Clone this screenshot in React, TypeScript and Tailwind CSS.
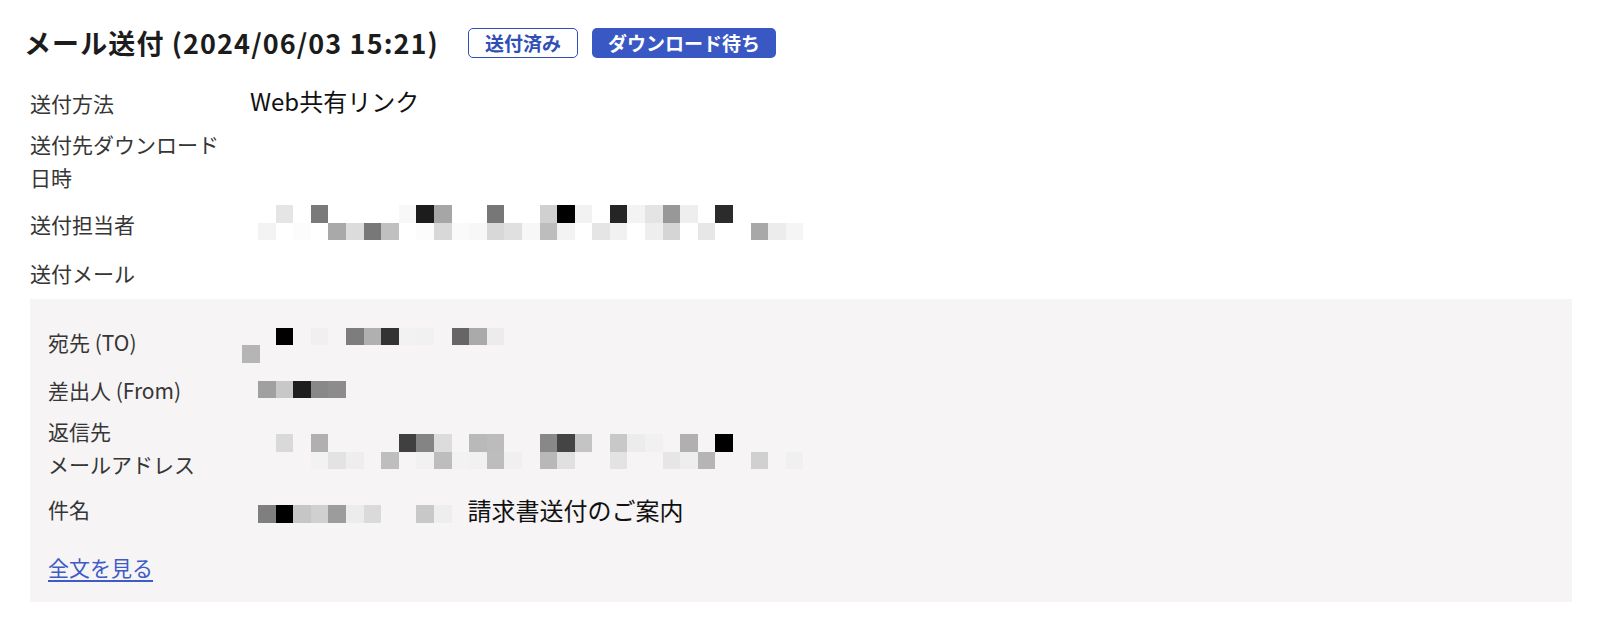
import React from 'react';

type Strip = { ml: string; cells: string[] };

const staff: Strip[] = [
  { ml: 'ml-[8px]', cells: ['', 'e5', '', '7a', '', '', '', '', 'f8', '1c', 'a6', '', '', '77', '', '', 'd0', '00', 'f2', '', '25', 'f3', 'e4', '98', 'ee', '', '2b'] },
  { ml: 'ml-[8px]', cells: ['f3', '', 'fc', '', 'a9', 'dc', '78', 'c0', '', 'fc', 'd8', 'fa', 'f7', 'd8', 'e0', 'f7', 'bd', 'f3', '', 'e5', 'f1', '', 'ee', 'd5', '', 'e7', '', '', 'a8', 'ec', 'f5'] },
];

const toAddr: Strip[] = [
  { ml: 'ml-[16px]', cells: ['', '00', '', 'f0', '', '7d', 'b0', '33', 'f2', 'f1', '', '66', 'aa', 'ec'] },
  { ml: 'ml-0', cells: ['b5'] },
];

const fromAddr: Strip[] = [{ ml: 'ml-[16px]', cells: ['a0', 'c8', '1e', '88', '8c'] }];

const replyAddr: Strip[] = [
  { ml: 'ml-[16px]', cells: ['', 'd9', '', 'b0', '', '', '', '', '40', '84', 'dc', '', 'b9', 'bc', '', '', '88', '44', 'c4', '', 'c8', 'ec', 'f1', '', 'b0', '', '00'] },
  { ml: 'ml-[16px]', cells: ['', '', '', 'f2', 'e3', 'ee', '', 'be', '', 'f1', 'bd', 'f2', 'f1', 'bd', 'f0', '', 'b8', 'e0', '', '', 'e3', '', '', 'e6', 'ee', 'b5', '', '', 'd0', '', 'f0'] },
];

const subjectCells = ['7f', '00', 'c6', 'd0', '9c', 'ec', 'da', '', '', 'c8', 'ee'];

// one grey square per entry, '' leaves the slot empty
function Cells({ cells }: { cells: string[] }) {
  return (
    <div className="flex">
      {cells.map((c, i) => (
        <span
          key={i}
          className="block h-[17.6px] w-[17.6px] shrink-0"
          style={c ? { backgroundColor: `#${c}${c}${c}` } : undefined}
        />
      ))}
    </div>
  );
}

function Mosaic({ rows }: { rows: Strip[] }) {
  return (
    <div className="flex flex-col">
      {rows.map((r, i) => (
        <div key={i} className={r.ml}>
          <Cells cells={r.cells} />
        </div>
      ))}
    </div>
  );
}

export default function App() {
  return (
    <div className="min-h-[627px] bg-white text-[#363636] font-['Noto_Sans_CJK_JP',sans-serif]">
      <header className="mt-[25px] flex h-[36px] items-center pl-[24px]">
        <h1 className="text-[27px] font-bold leading-[36px] tracking-[1.1px] text-[#1c1c1c]">メール送付 (2024/06/03 15:21)</h1>
        <span className="ml-[29px] flex h-[30px] items-center rounded-[5px] border-[1.5px] border-[#2f4fb6] bg-white px-[16px] text-[19px] font-bold text-[#2f4fb6]">
          送付済み
        </span>
        <span className="ml-[14px] flex h-[30px] items-center rounded-[5px] bg-[#3a58c3] px-[16px] text-[19px] font-bold text-white">
          ダウンロード待ち
        </span>
      </header>

      <div className="mt-[26px] px-[30px] pr-[28px] text-[21px] leading-[33px]">
        <div className="flex h-[41px] items-start">
          <div className="mr-[20px] w-[200px] shrink-0">送付方法</div>
          <div className="-mt-[4px] text-[24px] leading-[36px] text-[#111]">Web共有リンク</div>
        </div>
        <div className="flex h-[75px] items-start">
          <div className="mr-[20px] w-[200px] shrink-0">送付先ダウンロード日時</div>
          <div />
        </div>
        <div className="flex h-[54px] items-start">
          <div className="mr-[20px] mt-[5px] w-[200px] shrink-0">送付担当者</div>
          <div className="mt-[2px]">
            <Mosaic rows={staff} />
          </div>
        </div>
        <div className="flex h-[42px] items-start">
          <div className="mr-[20px] w-[200px] shrink-0">送付メール</div>
        </div>

        <section className="bg-[#f6f4f5] pb-[18px] pl-[18px] pt-[27px]">
          <div className="flex h-[48px] items-start">
            <div className="w-[194px] shrink-0">宛先 (TO)</div>
            <div className="mt-[1.5px]">
              <Mosaic rows={toAddr} />
            </div>
          </div>
          <div className="flex h-[41px] items-start">
            <div className="w-[194px] shrink-0">差出人 (From)</div>
            <div className="mt-[6.5px]">
              <Mosaic rows={fromAddr} />
            </div>
          </div>
          <div className="flex h-[78px] items-start">
            <div className="w-[194px] shrink-0">
              返信先
              <br />
              メールアドレス
            </div>
            <div className="mt-[19px]">
              <Mosaic rows={replyAddr} />
            </div>
          </div>
          <div className="flex h-[58px] items-start">
            <div className="w-[194px] shrink-0">件名</div>
            <div className="ml-[16px] mt-[12px]">
              <Cells cells={subjectCells} />
            </div>
            <div className="ml-[16px] text-[24px] leading-[33px] text-[#111]">請求書送付のご案内</div>
          </div>
          <a href="#" className="text-[#3d5cc8] underline underline-offset-[4px]">
            全文を見る
          </a>
        </section>
      </div>
    </div>
  );
}
